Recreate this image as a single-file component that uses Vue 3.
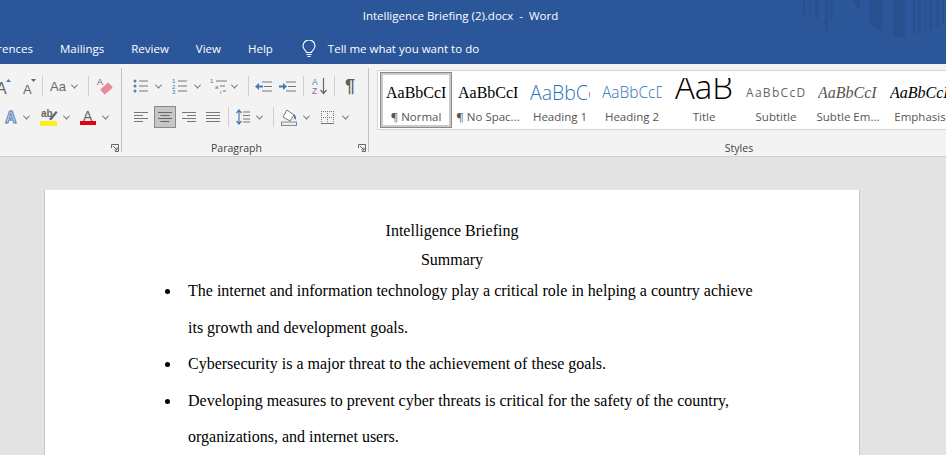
<template>
  <div class="word">
    <header class="titlebar">
      <span class="doc-name">Intelligence Briefing (2).docx&nbsp; -&nbsp; Word</span>
      <svg class="backdrop" width="143" height="38" viewBox="0 0 143 38">
        <g fill="#27508e">
          <rect x="0" y="0" width="2" height="15" />
          <rect x="6" y="0" width="2" height="15" />
          <rect x="12" y="0" width="3" height="19" />
          <rect x="22" y="0" width="3" height="32" />
          <rect x="27" y="0" width="3" height="19" />
          <polygon points="50,0 57,0 57,11" />
          <polygon points="67,0 79,0 79,32 67,24" />
          <rect x="90" y="0" width="12" height="37" />
          <rect x="110" y="0" width="2" height="34" />
          <rect x="115" y="0" width="3" height="33" />
          <rect x="121" y="0" width="2" height="33" />
          <rect x="126" y="0" width="3" height="30" />
          <rect x="133" y="0" width="3" height="26" />
          <rect x="139" y="0" width="2" height="24" />
        </g>
      </svg>
    </header>

    <nav class="tabs">
      <div class="tab-clip"><span>References</span></div>
      <span>Mailings</span>
      <span>Review</span>
      <span>View</span>
      <span>Help</span>
      <div class="tell-me">
        <svg width="14" height="18" viewBox="0 0 14 18" fill="none" stroke="#fff" stroke-width="1.1">
          <path d="M4.5 12.5C4.3 10.6 1 9.5 1 6a6 6 0 0 1 12 0c0 3.500-3.300 4.600-3.500 6.500z" />
          <path d="M4.500 14.500h5M5.500 16.500h3" />
        </svg>
        <span>Tell me what you want to do</span>
      </div>
    </nav>

    <section class="ribbon">
      <div class="group font-group">
        <div class="row">
          <div class="grow-clip">
            <svg width="15" height="20" viewBox="0 0 15 20">
              <text x="0" y="18" class="glyph" font-size="16">A</text>
              <path d="M10 6l2.500-3L15 6z" fill="#4a7ebb" />
            </svg>
          </div>
          <svg class="ml12" width="13" height="20" viewBox="0 0 13 20">
            <text x="0" y="18" class="glyph" font-size="13">A</text>
            <path d="M8 3h5l-2.500 3z" fill="#666" />
          </svg>
          <i class="sep ml6"></i>
          <span class="case ml7">Aa</span>
          <i class="chev ml6"></i>
          <i class="sep ml11"></i>
          <svg class="ml8" width="16" height="20" viewBox="0 0 16 20">
            <text x="0" y="9" class="glyph" font-size="9">A</text>
            <rect x="4" y="9" width="11" height="7" rx="1" transform="rotate(-42 9.500 12.500)" fill="#e98a9b" />
          </svg>
        </div>
        <div class="row">
          <svg class="ml4" width="14" height="18" viewBox="0 0 14 18">
            <text x="1" y="15" font-size="16" font-weight="700" fill="#cfe0f3" stroke="#4a7ebb" stroke-width="0.9" font-family="Liberation Sans, sans-serif">A</text>
          </svg>
          <i class="chev ml6"></i>
          <svg class="ml11" width="18" height="20" viewBox="0 0 18 20">
            <text x="1" y="10" class="glyph" font-size="10" font-weight="700">ab</text>
            <path d="M9 12l7-8 1.500 1.500-6.500 8z" fill="#666" />
            <rect x="0" y="14" width="17" height="5" fill="#fcee21" />
          </svg>
          <i class="chev ml6"></i>
          <svg class="ml11" width="16" height="20" viewBox="0 0 16 20">
            <text x="3" y="14" class="glyph" font-size="14">A</text>
            <rect x="0" y="14" width="16" height="4" fill="#e3000f" />
          </svg>
          <i class="chev ml7"></i>
        </div>
        <div class="group-foot">
          <span class="group-name"></span>
          <svg class="launcher" width="8" height="8" viewBox="0 0 8 8" fill="none" stroke="#666">
            <path d="M.5 4V.5H7.500V7.500H4M2 2l4 4M6 3.500V6H3.500" />
          </svg>
        </div>
      </div>

      <div class="group para-group">
        <div class="row">
          <svg class="ml11" width="15" height="16" viewBox="0 0 15 16">
            <g fill="#5f7f9f"><circle cx="2" cy="3" r="1.500" /><circle cx="2" cy="8" r="1.500" /><circle cx="2" cy="13" r="1.500" /></g>
            <path d="M6 3h9M6 8h9M6 13h9" stroke="#777" />
          </svg>
          <i class="chev ml8"></i>
          <svg class="ml11" width="15" height="16" viewBox="0 0 15 16">
            <g class="digits"><text x="0" y="5">1</text><text x="0" y="10.500">2</text><text x="0" y="16">3</text></g>
            <path d="M6 3h9M6 8h9M6 13h9" stroke="#777" />
          </svg>
          <i class="chev ml8"></i>
          <svg class="ml10" width="17" height="16" viewBox="0 0 17 16">
            <g class="digits"><text x="0" y="5">1</text><text x="5" y="10.500">a</text><text x="10" y="16">i</text></g>
            <path d="M6 3h11M10 8h5M13 13h3" stroke="#777" />
          </svg>
          <i class="chev ml5"></i>
          <i class="sep ml11"></i>
          <svg class="ml6" width="17" height="13" viewBox="0 0 17 13">
            <path d="M7 2h10M9 6.500h8M7 11h10" stroke="#777" />
            <path d="M0 6.500l4-3.500v2.500h4v2H4V10z" fill="#3f7cb5" />
          </svg>
          <svg class="ml7" width="17" height="13" viewBox="0 0 17 13">
            <path d="M7 2h10M9 6.500h8M7 11h10" stroke="#777" />
            <path d="M8 6.500l-4-3.500v2.500H0v2h4V10z" fill="#3f7cb5" />
          </svg>
          <i class="sep ml7"></i>
          <svg class="ml8" width="15" height="18" viewBox="0 0 15 18">
            <text x="0" y="7.500" font-size="8.500" fill="#3f7cb5" font-family="Liberation Sans, sans-serif">A</text>
            <text x="0" y="17" font-size="8.500" fill="#8a5fb0" font-family="Liberation Sans, sans-serif">Z</text>
            <path d="M11.500 1v15M8.500 13l3 3.500 3-3.500" fill="none" stroke="#666" stroke-width="1.200" />
          </svg>
          <i class="sep ml7"></i>
          <span class="pilcrow">¶</span>
        </div>
        <div class="row">
          <svg class="ml12" width="14" height="11" viewBox="0 0 14 11">
            <path d="M0 .5h14M0 3.500h9M0 6.500h14M0 9.500h9" stroke="#777" />
          </svg>
          <div class="align-on">
            <svg width="14" height="11" viewBox="0 0 14 11">
              <path d="M0 .5h14M2.500 3.500h9M0 6.500h14M2.500 9.500h9" stroke="#666" />
            </svg>
          </div>
          <svg class="ml6" width="14" height="11" viewBox="0 0 14 11">
            <path d="M0 .5h14M5 3.500h9M0 6.500h14M5 9.500h9" stroke="#777" />
          </svg>
          <svg class="ml10" width="14" height="11" viewBox="0 0 14 11">
            <path d="M0 .5h14M0 3.500h14M0 6.500h14M0 9.500h14" stroke="#777" />
          </svg>
          <i class="sep ml8"></i>
          <svg class="ml7" width="14" height="16" viewBox="0 0 14 16">
            <path d="M3 1v14M.5 4L3 1l2.500 3M.5 12L3 15l2.500-3" fill="none" stroke="#3f7cb5" stroke-width="1.200" />
            <path d="M7 3h7M7 6.500h7M7 10h7M7 13h7" stroke="#777" />
          </svg>
          <i class="chev ml7"></i>
          <i class="sep ml11"></i>
          <svg class="ml7" width="16" height="17" viewBox="0 0 16 17">
            <path d="M2 8l4-7 7 5-4 6z" fill="#fff" stroke="#777" />
            <path d="M13 5c2 2 2.500 4 2 5-.5 1-2.500.5-2-5z" fill="#3f7cb5" />
            <rect x=".5" y="13" width="15" height="3.500" fill="#eee" stroke="#888" />
          </svg>
          <i class="chev ml7"></i>
          <svg class="ml12" width="13" height="13" viewBox="0 0 13 13" fill="none" stroke="#777" stroke-dasharray="1 1">
            <path d="M.5 0v13M6.500 0v13M12.500 0v13M0 .5h13M0 6.500h13" />
            <path d="M0 12.500h13" stroke-dasharray="none" />
          </svg>
          <i class="chev ml9"></i>
        </div>
        <div class="group-foot">
          <span class="group-name para-name">Paragraph</span>
          <svg class="launcher" width="8" height="8" viewBox="0 0 8 8" fill="none" stroke="#666">
            <path d="M.5 4V.5H7.500V7.500H4M2 2l4 4M6 3.500V6H3.500" />
          </svg>
        </div>
      </div>

      <div class="group styles-group">
        <div class="gallery">
          <div v-for="s in styles" :key="s.label" class="style-cell" :class="{ selected: s.selected }">
            <div class="preview" :class="s.kind">{{ s.sample }}</div>
            <div class="style-label">{{ s.label }}</div>
          </div>
        </div>
        <div class="group-foot styles-foot">
          <span class="group-name">Styles</span>
        </div>
      </div>
    </section>

    <main class="canvas">
      <article class="page">
        <p class="doc-title">Intelligence Briefing</p>
        <p class="doc-sub">Summary</p>
        <ul class="points">
          <li v-for="p in points" :key="p"><i class="bullet"></i><span>{{ p }}</span></li>
        </ul>
      </article>
    </main>
  </div>
</template>

<script setup>
const styles = [
  { label: "¶ Normal", sample: "AaBbCcI", kind: "serif", selected: true },
  { label: "¶ No Spac...", sample: "AaBbCcI", kind: "serif" },
  { label: "Heading 1", sample: "AaBbCc", kind: "h1" },
  { label: "Heading 2", sample: "AaBbCcD", kind: "h2" },
  { label: "Title", sample: "AaB", kind: "title" },
  { label: "Subtitle", sample: "AaBbCcD", kind: "subtitle" },
  { label: "Subtle Em...", sample: "AaBbCcI", kind: "subtle" },
  { label: "Emphasis", sample: "AaBbCcI", kind: "emph" },
];

const points = [
  "The internet and information technology play a critical role in helping a country achieve its growth and development goals.",
  "Cybersecurity is a major threat to the achievement of these goals.",
  "Developing measures to prevent cyber threats is critical for the safety of the country, organizations, and internet users.",
];
</script>

<style>
html,
body {
  margin: 0;
  overflow: hidden;
}
</style>

<style scoped>
.word {
  width: 946px;
  height: 455px;
  overflow: hidden;
  display: flex;
  flex-direction: column;
  background: #e3e3e3;
  font-family: "Open Sans", "Noto Sans", sans-serif;
}

.titlebar {
  position: relative;
  height: 32px;
  flex: none;
  background: #2b579a;
  color: #fff;
  font-size: 11.5px;
  line-height: 32px;
  text-align: center;
  padding-right: 25px;
}

.backdrop {
  position: absolute;
  top: 0;
  right: 0;
}

.tabs {
  height: 32px;
  flex: none;
  display: flex;
  align-items: center;
  gap: 27px;
  background: #2b579a;
  color: #fff;
  font-size: 11.5px;
  white-space: nowrap;
  padding-top: 1px;
  box-sizing: border-box;
}

.tab-clip {
  width: 33px;
  display: flex;
  justify-content: flex-end;
  overflow: hidden;
}

.tell-me {
  display: flex;
  align-items: center;
  gap: 12px;
  margin-left: 2px;
}

.ribbon {
  height: 93px;
  flex: none;
  display: flex;
  overflow: hidden;
  box-sizing: border-box;
  padding-top: 4px;
  background: #f3f3f3;
  border-bottom: 1px solid #cfcfcf;
}

.group {
  position: relative;
  flex: none;
  height: 88px;
  box-sizing: border-box;
  padding-top: 7px;
  display: flex;
  flex-direction: column;
}

.group::after {
  content: "";
  position: absolute;
  top: 0;
  right: 0;
  bottom: 4px;
  width: 1px;
  background: #c4c4c4;
}

.font-group {
  width: 122px;
}

.para-group {
  width: 247px;
}

.styles-group {
  width: 740px;
  padding-top: 2px;
}

.styles-group::after {
  display: none;
}

.row {
  height: 22px;
  margin-bottom: 9px;
  display: flex;
  align-items: center;
  flex: none;
}

.row svg {
  flex: none;
}

.grow-clip {
  width: 15px;
  height: 20px;
  margin-left: -4px;
  overflow: hidden;
}

.glyph {
  fill: #666;
  font-family: "Liberation Sans", sans-serif;
}

.digits text {
  fill: #4a7299;
  font-size: 6px;
  font-family: "Liberation Sans", sans-serif;
}

.sep {
  width: 1px;
  height: 20px;
  background: #cfcfcf;
  flex: none;
}

.chev {
  width: 5px;
  height: 5px;
  flex: none;
  box-sizing: border-box;
  border-right: 1px solid #666;
  border-bottom: 1px solid #666;
  transform: rotate(45deg) translate(-1px, -1px);
}

.case {
  color: #666;
  font-size: 13px;
  font-family: "Liberation Sans", sans-serif;
}

.pilcrow {
  margin-left: 10px;
  color: #5f5f5f;
  font-size: 18px;
  font-weight: 700;
  font-family: "Liberation Sans", sans-serif;
}

.align-on {
  width: 22px;
  height: 22px;
  margin-left: 6px;
  box-sizing: border-box;
  display: flex;
  align-items: center;
  justify-content: center;
  background: #c6c6c6;
  border: 1px solid #8a8a8a;
}

.ml4 { margin-left: 4px; }
.ml5 { margin-left: 5px; }
.ml6 { margin-left: 6px; }
.ml7 { margin-left: 7px; }
.ml8 { margin-left: 8px; }
.ml9 { margin-left: 9px; }
.ml10 { margin-left: 10px; }
.ml11 { margin-left: 11px; }
.ml12 { margin-left: 12px; }

.group-foot {
  margin-top: auto;
  height: 16px;
  flex: none;
  display: flex;
  align-items: center;
  justify-content: flex-end;
  padding-right: 3px;
}

.group-name {
  flex: 1;
  font-size: 10.5px;
  line-height: 16px;
  color: #444;
  text-align: center;
}

.para-name {
  padding-right: 7px;
}

.launcher {
  flex: none;
}

.gallery {
  height: 60px;
  margin-left: 8px;
  box-sizing: border-box;
  border: 1px solid #d6d6d6;
  padding: 1px 2px;
  display: flex;
  background: #fff;
}

.style-cell {
  width: 72px;
  flex: none;
  box-sizing: border-box;
  display: flex;
  flex-direction: column;
  align-items: center;
  padding-top: 4px;
  overflow: hidden;
}

.style-cell.selected {
  outline: 1px solid #8a8a8a;
  outline-offset: -1px;
  border: 3px solid #c9c9c9;
  padding-top: 1px;
}

.preview {
  width: 60px;
  height: 32px;
  flex: none;
  overflow: hidden;
  white-space: nowrap;
  line-height: 33px;
  color: #000;
}

.preview.serif {
  font: 16px/33px "Liberation Serif", serif;
}

.preview.h1 {
  color: #2e74b5;
  font-size: 19.500px;
  font-weight: 300;
}

.preview.h2 {
  color: #2e74b5;
  font-size: 15.500px;
  font-weight: 300;
}

.preview.title {
  height: 30px;
  margin-top: 2px;
  text-align: center;
  font-size: 33px;
  font-weight: 300;
  line-height: 18px;
}

.preview.subtitle {
  color: #666;
  font-size: 12px;
  letter-spacing: 1.300px;
}

.preview.subtle {
  color: #555;
  font: italic 16px/33px "Liberation Serif", serif;
}

.preview.emph {
  font: italic 16px/33px "Liberation Serif", serif;
}

.style-label {
  color: #555;
  font-size: 11.500px;
  line-height: 18px;
  white-space: nowrap;
}

.styles-foot {
  padding-right: 0;
}

.canvas {
  flex: 1;
  min-height: 0;
  padding: 33px 86px 0 44px;
}

.page {
  height: 500px;
  box-sizing: border-box;
  padding-top: 26px;
  background: #fff;
  border-left: 1px solid #c8c8c8;
  border-right: 1px solid #c8c8c8;
  color: #000;
  font-family: "Liberation Serif", serif;
  font-size: 16px;
}

.doc-title,
.doc-sub {
  margin: 0;
  text-align: center;
}

.doc-title {
  line-height: 30px;
}

.doc-sub {
  line-height: 27px;
}

.points {
  width: 590px;
  margin: 0;
  padding: 0 0 0 120px;
  list-style: none;
  line-height: 36.600px;
}

.points li {
  display: flex;
  align-items: flex-start;
}

.bullet {
  width: 5px;
  height: 5px;
  flex: none;
  margin: 16px 18px 0 0;
  border-radius: 50%;
  background: #000;
}
</style>
